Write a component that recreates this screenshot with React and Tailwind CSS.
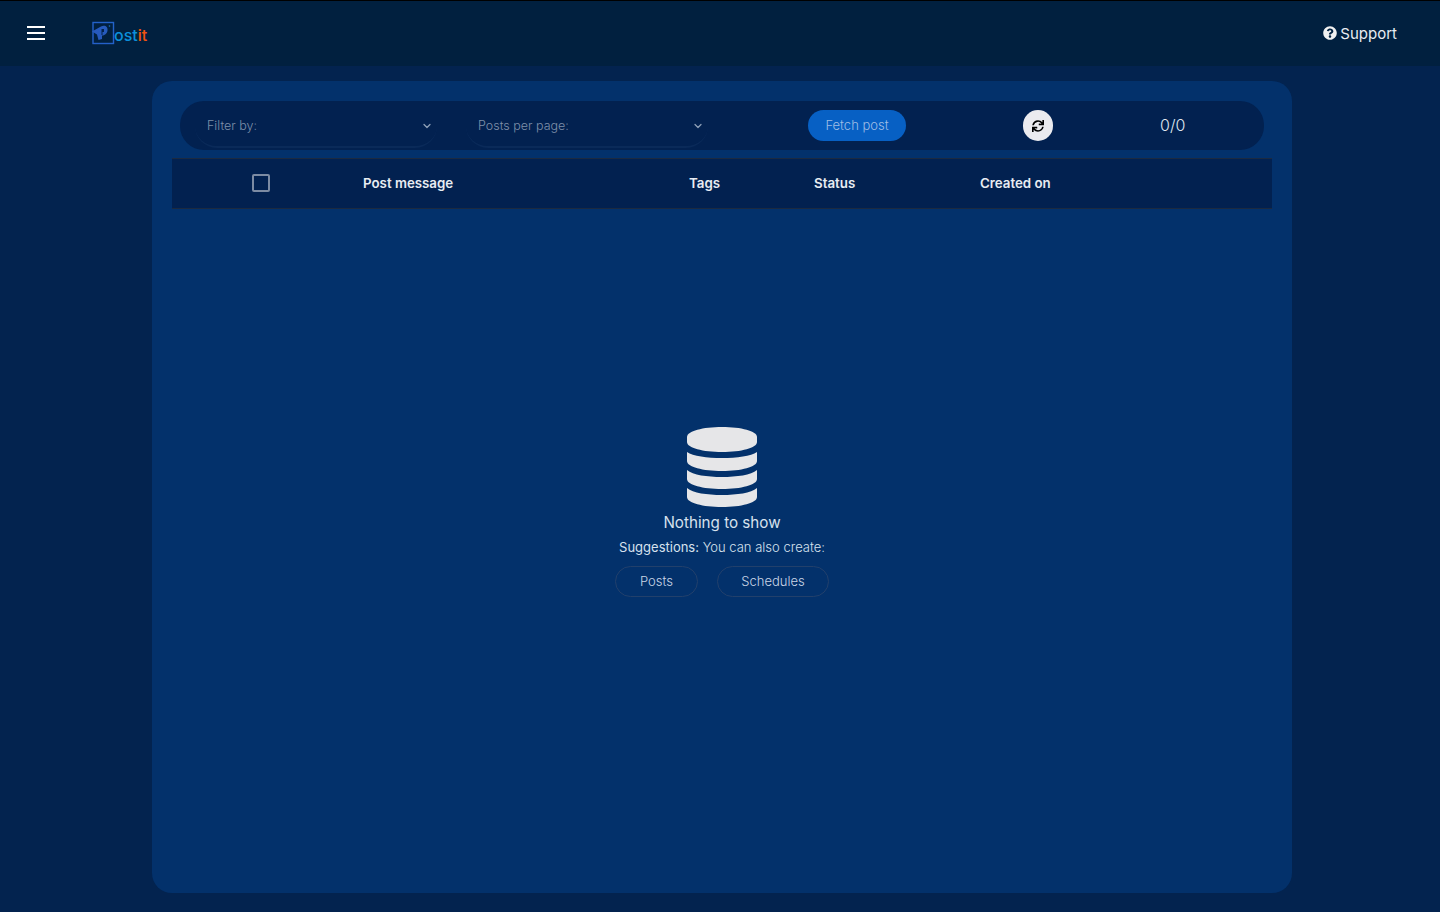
import { FaQuestionCircle, FaSync } from 'react-icons/fa';
import { ChevronDown } from 'lucide-react';

function Logo() {
  return (
    <div className="flex items-end w-[58px] h-[24px] -mt-[2px] ml-px">
      <svg width="23" height="24" viewBox="0 0 23 24" fill="none" className="shrink-0">
        <defs>
          <linearGradient id="logoBox" x1="0" y1="24" x2="23" y2="0">
            <stop offset="0" stopColor="#3f2fb0" />
            <stop offset="1" stopColor="#0a8fe0" />
          </linearGradient>
          <linearGradient id="logoMark" x1="0" y1="12" x2="16" y2="8">
            <stop offset="0" stopColor="#2a50b8" />
            <stop offset="1" stopColor="#1780d0" />
          </linearGradient>
        </defs>
        <rect x="1" y="1.5" width="20.5" height="21" stroke="url(#logoBox)" strokeWidth="1.4" />
        <path d="M0 10.5 L9 5.5 C13 3.5 16 6 15.5 9.5 C15 13 12.5 14.5 10 14.5 L10 18 L6.5 19 L5 13.5 Z" fill="url(#logoMark)" />
        <path d="M9.5 8 H12 V11 H10.5 V14 H9.5 Z" fill="#02224d" />
        <circle cx="17.5" cy="5" r="0.8" fill="#1b74c9" />
      </svg>
      <span className="text-[16px] leading-[20px] font-medium text-[#0b90dc] -ml-px">
        ost<span className="text-[#f2540f]">it</span>
      </span>
    </div>
  );
}

// four-layer stack, the icon package's database only has three
function StackIcon() {
  return (
    <svg width="70" height="80" viewBox="0 0 70 80" fill="#e6e6e8">
      <path d="M0 10 C0 4 16 0 35 0 S70 4 70 10 V15 C70 21 54 25 35 25 S0 21 0 15 Z" />
      <path d="M0 25 C6 29 20 31 35 31 S64 29 70 25 V34 C70 40 54 44 35 44 S0 40 0 34 Z" />
      <path d="M0 43 C6 48 20 50 35 50 S64 48 70 43 V52 C70 58 54 62 35 62 S0 58 0 52 Z" />
      <path d="M0 61 C6 66 20 68 35 68 S64 66 70 61 V70 C70 76 54 80 35 80 S0 76 0 70 Z" />
    </svg>
  );
}

function FilterSelect({ label }) {
  return (
    <div className="w-[242px] h-[45px] pt-[3px] rounded-[22px] border-b-2 border-[#0a2a59] flex items-center justify-between pl-[12px] pr-[4px]">
      <span className="text-[12.5px] font-light text-[#7e90aa]">{label}</span>
      <ChevronDown size={12} strokeWidth={2.5} className="text-[#8fa0b8]" />
    </div>
  );
}

export default function App() {
  return (
    <div className="h-[912px] flex flex-col overflow-hidden font-['Inter',sans-serif] bg-[#03234f]">
      {/* Top bar */}
      <header className="h-[66px] shrink-0 border-t border-black bg-[#01203f] flex items-center justify-between pl-[27px] pr-[43px]">
        <div className="flex items-center gap-[46px]">
          <div className="w-[18px] flex flex-col gap-[4px] -mt-[2px]">
            <span className="h-[2px] bg-white" />
            <span className="h-[2px] bg-white" />
            <span className="h-[2px] bg-white" />
          </div>
          <Logo />
        </div>
        <div className="flex items-center gap-[3px] text-[#e8ecf2] text-[15px]">
          <FaQuestionCircle size={14} className="text-[#f0f0f0] -mt-[2px]" />
          <span className="mt-px">Support</span>
        </div>
      </header>

      {/* Main panel */}
      <main className="w-[1140px] h-[812px] mt-[15px] ml-[152px] rounded-[20px] bg-[#03316b] px-[20px] pt-[20px] flex flex-col">
        <div className="mx-[8px] h-[49px] rounded-[24px] bg-[#022150] flex items-center pl-[15px]">
          <FilterSelect label="Filter by:" />
          <div className="ml-[29px]">
            <FilterSelect label="Posts per page:" />
          </div>
          <button className="ml-[100px] w-[98px] h-[31px] rounded-full bg-[#0760c4] text-[13px] font-light text-[#9fbde4]">
            Fetch post
          </button>
          <button className="ml-[117px] w-[30px] h-[31px] rounded-full bg-[#ebebef] flex items-center justify-center">
            <FaSync size={12} className="text-black" />
          </button>
          <span className="ml-[107px] -mt-[2px] text-[16px] font-light text-[#dfe5ee]">0/0</span>
        </div>

        <div className="mt-[8px] h-[51px] shrink-0 bg-[#022150] border-y border-[#1c2a40] flex items-center text-[13.3px] font-semibold text-[#e8ecf2]">
          <div className="w-[191px] pl-[80px] -mt-[2px]">
            <div className="w-[18px] h-[18px] rounded-[2px] border-2 border-[#7c8ba3]" />
          </div>
          <div className="w-[326px]">Post message</div>
          <div className="w-[125px]">Tags</div>
          <div className="w-[166px]">Status</div>
          <div>Created on</div>
        </div>

        {/* Empty state */}
        <div className="flex flex-col items-center pt-[218px]">
          <StackIcon />
          <p className="mt-[4px] text-[15.2px] leading-[24px] text-[#d7e1ee]">Nothing to show</p>
          <p className="text-[13px] leading-[24px] font-light text-[#d7e1ee]">
            <span className="font-normal">Suggestions:</span> You can also create:
          </p>
          <div className="mt-[7px] flex gap-[19px]">
            <button className="w-[83px] h-[31px] rounded-full border border-[#22406b] text-[13px] font-light text-[#c9d5e6]">
              Posts
            </button>
            <button className="w-[112px] h-[31px] rounded-full border border-[#22406b] text-[13px] font-light text-[#c9d5e6]">
              Schedules
            </button>
          </div>
        </div>
      </main>
    </div>
  );
}
